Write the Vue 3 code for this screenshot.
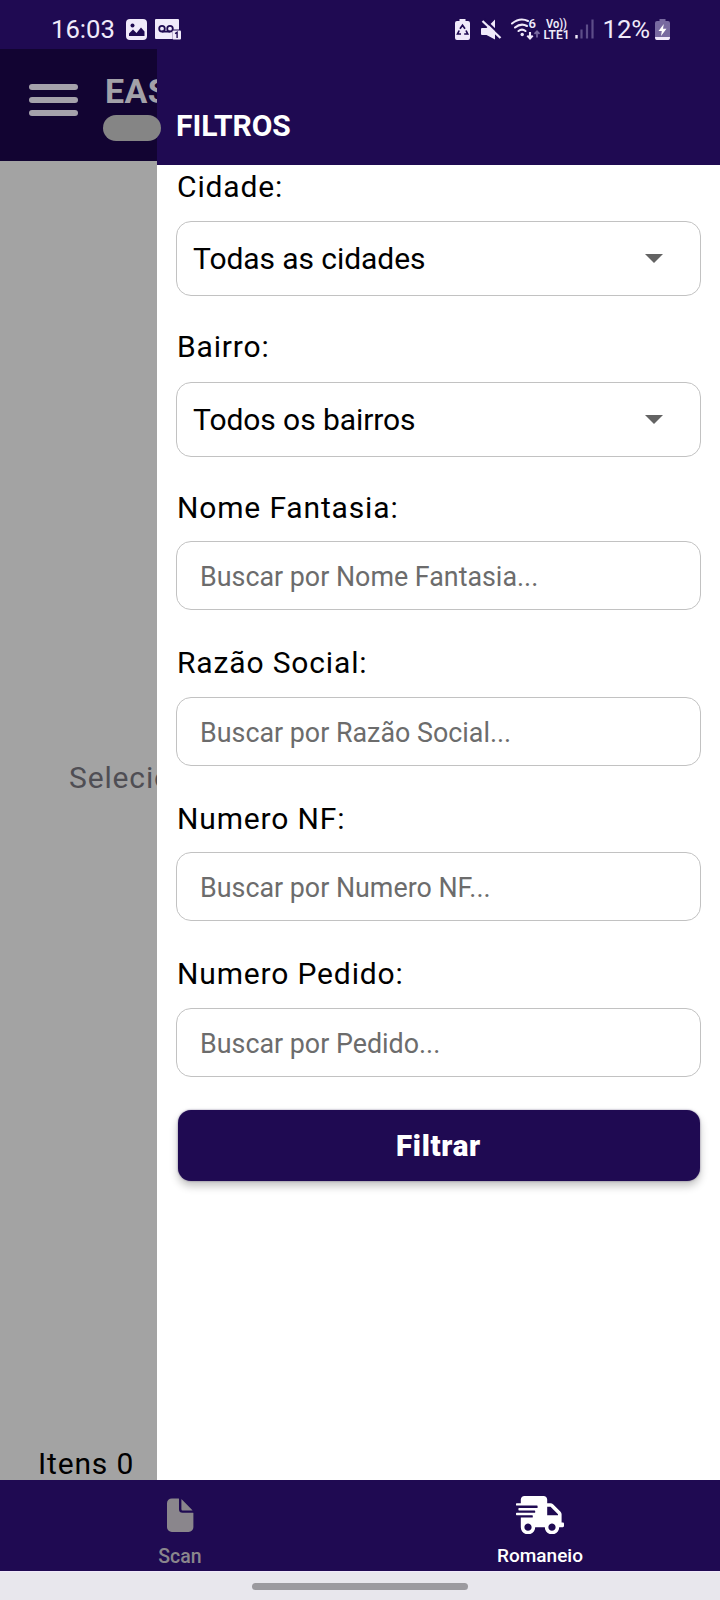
<script setup>
const selects = [
  { label: 'Cidade:', value: 'Todas as cidades' },
  { label: 'Bairro:', value: 'Todos os bairros' },
]
const inputs = [
  { label: 'Nome Fantasia:', placeholder: 'Buscar por Nome Fantasia...' },
  { label: 'Razão Social:', placeholder: 'Buscar por Razão Social...' },
  { label: 'Numero NF:', placeholder: 'Buscar por Numero NF...' },
  { label: 'Numero Pedido:', placeholder: 'Buscar por Pedido...' },
]
</script>

<template>
  <div class="phone">
    <header class="status">
      <div class="status-left">
        <span class="clock">16:03</span>
        <svg class="ic-picture" width="21" height="21" viewBox="0 0 21 21">
          <rect width="21" height="21" rx="4" fill="#f0eafa" />
          <circle cx="6.500" cy="6.500" r="2" fill="#1f0a52" />
          <path d="M3 17V14.500L7 10.500l3.500 3.500L15 8.500l3.500 4V17z" fill="#1f0a52" />
        </svg>
        <svg class="ic-mail" width="27" height="21" viewBox="0 0 27 21">
          <path d="M1 0h22q1 0 1 1v9.500h-6.500V20H1q-1 0-1-1V1q0-1 1-1z" fill="#f0eafa" />
          <g fill="none" stroke="#1f0a52" stroke-width="1.800">
            <circle cx="7" cy="9.700" r="2.800" />
            <circle cx="15" cy="9.700" r="2.800" />
            <path d="M7 12.600h8" />
          </g>
          <rect x="17.500" y="11.500" width="8.500" height="9" rx="1" fill="#f0eafa" />
          <path d="M20.100 14.600l2-1.300v5.800" fill="none" stroke="#1f0a52" stroke-width="1.400" />
        </svg>
      </div>
      <div class="status-right">
        <svg width="206" height="24" viewBox="0 0 206 24">
          <g fill="#f0eafa">
            <path d="M4.500 2V0h6v2h2.500q2 0 2 2v15q0 2-2 2H2q-2 0-2-2V4q0-2 2-2z" />
            <path d="M5 9.800L7.500 6.300l2.500 3.500M11 11.500l1.700 3.500H9.200M6 15H2.500l1.700-3.500" fill="none" stroke="#1f0a52" stroke-width="1.700" />
            <path d="M27 9h4.500L40 .5V20.500L31.500 16H27q-1 0-1-1V10q0-1 1-1z" />
            <path d="M29 0L47 17.500" stroke="#1f0a52" stroke-width="2.400" />
            <path d="M27.500 2L45.500 19" stroke="#f0eafa" stroke-width="2.300" />
          </g>
          <g fill="none" stroke="#f0eafa" stroke-width="2.100" stroke-linecap="round">
            <path d="M57 4.500q8-6.500 16-2.500" />
            <path d="M60 8.500q6-5 12-1.500" />
            <path d="M63.500 12q3.500-2.800 7 0" />
            <path d="M75 13v6M72.300 16.600l2.700 2.900 2.700-2.900" stroke-linecap="butt" />
            <path d="M82 18.500v-6M79.500 14.800L82 12.300l2.500 2.500" stroke="#786aa0" stroke-width="1.700" stroke-linecap="butt" />
          </g>
          <circle cx="67.200" cy="15.500" r="1.700" fill="#f0eafa" />
          <g fill="#f0eafa" class="tiny">
            <text x="73.500" y="9" font-size="13">6</text>
            <text x="91" y="8.700" font-size="12" textLength="21" lengthAdjust="spacingAndGlyphs">Vo))</text>
            <text x="88.500" y="20.300" font-size="13" textLength="26" lengthAdjust="spacingAndGlyphs">LTE1</text>
          </g>
          <path d="M121.500 19.500v-3.500" stroke="#f0eafa" stroke-width="2.400" />
          <path d="M126.500 19.500v-9M132 19.500V5.500M137.500 19.500V.5" stroke="#5d4d89" stroke-width="2.200" />
          <text x="147.500" y="19" fill="#f0eafa" font-size="25.700" class="percent">12%</text>
        </svg>
        <svg class="ic-battery" width="15" height="21" viewBox="0 0 15 21">
          <path d="M4.500 2V0h6v2H13q2 0 2 2v15q0 2-2 2H2q-2 0-2-2V4q0-2 2-2z" fill="#786aa0" />
          <path d="M0 18h15q0 3-2 3H2q-2 0-2-3z" fill="#f0eafa" />
          <path d="M8.800 5L3.500 12h3.300l-.8 5 5.500-7.200H8z" fill="#fff" />
        </svg>
      </div>
    </header>

    <main class="stage">
      <section class="backdrop">
        <div class="appbar">
          <div class="burger"><i></i><i></i><i></i></div>
          <span class="brand">EAS</span>
        </div>
        <p class="empty">Selecio</p>
        <p class="count">Itens 0</p>
      </section>

      <section class="drawer">
        <h1 class="title">FILTROS</h1>
        <form class="form" @submit.prevent>
          <div v-for="s in selects" :key="s.label" class="field field-select">
            <label class="label">{{ s.label }}</label>
            <div class="select">
              <span>{{ s.value }}</span>
              <svg width="18" height="9" viewBox="0 0 18 9"><path d="M0 0h18L9 9z" fill="#636363" /></svg>
            </div>
          </div>
          <div v-for="f in inputs" :key="f.label" class="field field-input">
            <label class="label">{{ f.label }}</label>
            <input class="input" type="text" :placeholder="f.placeholder" />
          </div>
          <button class="submit" type="submit">Filtrar</button>
        </form>
      </section>
      <div class="redacted"></div>
    </main>

    <nav class="tabs">
      <div class="tab">
        <svg width="38.400" height="38.400" viewBox="0 0 512 512" fill="currentColor">
          <path d="M428 224H288a48 48 0 01-48-48V36a4 4 0 00-4-4h-92a64 64 0 00-64 64v320a64 64 0 0064 64h224a64 64 0 0064-64V228a4 4 0 00-4-4z" />
          <path d="M419.220 188.590L275.410 44.780a2 2 0 00-3.410 1.410V176a16 16 0 0016 16h129.810a2 2 0 001.410-3.410z" />
        </svg>
        <span class="scan-label">Scan</span>
      </div>
      <div class="tab active">
        <svg width="48" height="38.400" viewBox="0 0 640 512" fill="currentColor">
          <path d="M624 352h-16V243.900c0-12.700-5.100-24.900-14.100-33.900L494 110.100c-9-9-21.200-14.100-33.900-14.100H416V48c0-26.500-21.500-48-48-48H112C85.500 0 64 21.500 64 48v48H8c-4.400 0-8 3.600-8 8v16c0 4.400 3.600 8 8 8h272c4.400 0 8 3.600 8 8v16c0 4.400-3.600 8-8 8H40c-4.400 0-8 3.600-8 8v16c0 4.400 3.600 8 8 8h208c4.400 0 8 3.600 8 8v16c0 4.400-3.600 8-8 8H8c-4.400 0-8 3.600-8 8v16c0 4.400 3.600 8 8 8h208c4.400 0 8 3.600 8 8v16c0 4.400-3.600 8-8 8H64v128c0 53 43 96 96 96s96-43 96-96h128c0 53 43 96 96 96s96-43 96-96h48c8.800 0 16-7.200 16-16v-32c0-8.800-7.200-16-16-16zM160 464c-26.500 0-48-21.500-48-48s21.500-48 48-48 48 21.500 48 48-21.500 48-48 48zm320 0c-26.500 0-48-21.500-48-48s21.500-48 48-48 48 21.500 48 48-21.500 48-48 48zm80-208H416V144h44.100l99.900 99.900V256z" />
        </svg>
        <span>Romaneio</span>
      </div>
    </nav>
    <div class="gesture"><span></span></div>
  </div>
</template>

<style scoped>
.phone {
  width: 720px;
  height: 1600px;
  display: flex;
  flex-direction: column;
  overflow: hidden;
  background: #fff;
  font-family: Roboto, "Liberation Sans", sans-serif;
  color: #000;
}
.phone * { box-sizing: border-box; }
.status {
  height: 49px;
  flex: none;
  display: flex;
  justify-content: space-between;
  background: #1f0a52;
  color: #f0eafa;
}
.status-left { display: flex; align-items: flex-start; padding-left: 51px; }
.clock { width: 75px; font-size: 25.700px; line-height: 29px; margin-top: 15px; }
.ic-picture { margin-top: 19px; }
.ic-mail { margin: 19px 0 0 8px; }
.status-right { display: flex; align-items: flex-start; padding: 19px 50px 0 0; }
.status-right svg { overflow: visible; flex: none; }
.ic-battery { margin-left: -6px; }
.tiny { font-weight: 600; }

.stage { flex: 1; min-height: 0; display: flex; position: relative; }
.backdrop {
  width: 157px;
  display: flex;
  flex-direction: column;
  overflow: hidden;
  white-space: nowrap;
  background: #a3a3a3;
}
.backdrop p { margin: 0; font-size: 30px; line-height: 40px; letter-spacing: 0.850px; }
.appbar {
  height: 112px;
  flex: none;
  display: flex;
  align-items: flex-start;
  background: #120432;
}
.burger { width: 49px; margin: 35px 27px 0 29px; flex: none; display: flex; flex-direction: column; gap: 7px; }
.burger i { height: 6px; border-radius: 3px; background: #a5a2ab; }
.brand { margin-top: 22px; font-size: 34px; line-height: 40px; font-weight: 700; letter-spacing: 0.400px; color: #a3a1a8; }
.backdrop .empty { margin: 597px 0 0 69px; color: #4f4e54; }
.backdrop .count { margin: auto 0 -4px 38px; }

.drawer { flex: 1; display: flex; flex-direction: column; background: #fff; margin-top: -1px; }
.title {
  height: 116.500px;
  flex: none;
  margin: 0;
  padding: 58px 0 0 19px;
  font-size: 30px;
  line-height: 40px;
  font-weight: 700;
  letter-spacing: -0.050px;
  color: #fff;
  background: #1f0a52;
}
.form { display: flex; flex-direction: column; padding: 2px 19px 0; }
.field { display: flex; flex-direction: column; }
.label { height: 40px; padding-left: 1px; font-size: 30px; line-height: 40px; letter-spacing: 0.850px; }
.field-select { height: 160.400px; }
.field-input { height: 155.400px; }
.select {
  height: 75px;
  margin-top: 14.600px;
  padding: 0 37px 0 16px;
  display: flex;
  align-items: center;
  justify-content: space-between;
  border: 1.500px solid #c2c2c2;
  border-radius: 15px;
  font-size: 30px;
  letter-spacing: -0.070px;
}
.field-select + .field-select .select { margin-top: 15.100px; }
.field-input .label { position: relative; top: 0.500px; }
.input {
  height: 69px;
  margin: 14.200px 0 0;
  padding: 3px 22px 0 23px;
  border: 1.500px solid #c2c2c2;
  border-radius: 15px;
  background: #fff;
  font: 26.850px Roboto, "Liberation Sans", sans-serif;
}
.input::placeholder { color: #6c6c6c; opacity: 1; }
.submit {
  height: 71px;
  margin: 1px 1px 0 2px;
  padding: 3px 7px 1px 6px;
  border: 0;
  border-radius: 13px;
  background: #1f0a52;
  color: #fff;
  font: 900 29.500px Roboto, "Liberation Sans", sans-serif;
  letter-spacing: 0.700px;
  box-shadow: 0 5px 9px rgba(0, 0, 0, 0.240), 0 0 2px rgba(31, 10, 82, 0.500);
}
.redacted {
  position: absolute;
  left: 103px;
  top: 66px;
  width: 58px;
  height: 26px;
  border-radius: 13px;
  background: #858585;
}

.tabs { height: 91px; flex: none; display: flex; background: #1f0a52; }
.tab {
  flex: 1;
  display: flex;
  flex-direction: column;
  align-items: center;
  padding-top: 16px;
  color: #8a868c;
}
.tab span { margin-top: 10px; font-size: 19px; line-height: 24px; font-weight: 500; }
.tab .scan-label { margin-top: 10.500px; font-size: 19.500px; }
.active { color: #fff; }
.gesture { height: 29px; flex: none; display: flex; justify-content: center; padding-top: 11px; background: #e8e7ed; border-top: 1px solid #f1e9fb; }
.gesture span { width: 216px; height: 7px; border-radius: 4px; background: #9b9a9f; }
</style>

<style>
body { margin: 0; }
</style>
